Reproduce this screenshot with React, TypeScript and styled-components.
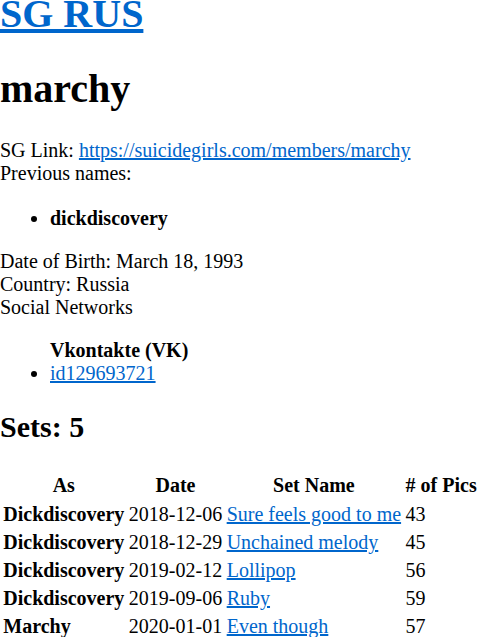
import styled, { createGlobalStyle } from 'styled-components';

const GlobalStyle = createGlobalStyle`
  body {
    margin: 0;
    background: #fff;
    color: #000;
    font-family: "Liberation Serif", "Times New Roman", serif;
    font-size: 20px;
  }
`;

const Link = styled.a`
  color: #0066cc;
  text-decoration: underline;
`;

const SiteTitle = styled.h1`
  font-size: 40px;
  margin: -10px 0 28px;
`;

const Name = styled.h1`
  font-size: 40px;
  margin: 0 0 26.8px;
`;

const Info = styled.div`
  line-height: normal;
`;

const List = styled.ul<{ $top?: number }>`
  margin: ${p => p.$top ?? 20}px 0 20px;
  padding-left: 50px;
`;

const Label = styled.b`
  display: block;
`;

const SetsTitle = styled.h2`
  font-size: 30px;
  margin: 25px 0 27px;
`;

const Table = styled.table`
  border-spacing: 2.5px;
  font-size: 20px;
  white-space: nowrap;
`;

const HeadCell = styled.th`
  padding: 1.6px 1.25px;
  text-align: center;
`;

const Cell = styled.td<{ $bold?: boolean }>`
  padding: 1.6px 1.25px;
  font-weight: ${p => (p.$bold ? 'bold' : 'normal')};
`;

interface SetRow {
  as: string;
  date: string;
  name: string;
  pics: number;
}

const sets: SetRow[] = [
  { as: 'Dickdiscovery', date: '2018-12-06', name: 'Sure feels good to me', pics: 43 },
  { as: 'Dickdiscovery', date: '2018-12-29', name: 'Unchained melody', pics: 45 },
  { as: 'Dickdiscovery', date: '2019-02-12', name: 'Lollipop', pics: 56 },
  { as: 'Dickdiscovery', date: '2019-09-06', name: 'Ruby', pics: 59 },
  { as: 'Marchy', date: '2020-01-01', name: 'Even though', pics: 57 },
];

const App = () => {
  return (
    <>
      <GlobalStyle />
      <SiteTitle>
        <Link href="#">SG RUS</Link>
      </SiteTitle>
      <Name>marchy</Name>
      <Info>
        SG Link: <Link href="#">https://suicidegirls.com/members/marchy</Link>
        <br />
        Previous names:
        <List $top={22}>
          <li>
            <b>dickdiscovery</b>
          </li>
        </List>
        Date of Birth: March 18, 1993
        <br />
        Country: Russia
        <br />
        Social Networks
        <List>
          <Label>Vkontakte (VK)</Label>
          <li>
            <Link href="#">id129693721</Link>
          </li>
        </List>
      </Info>
      <SetsTitle>Sets: 5</SetsTitle>
      <Table>
        <thead>
          <tr>
            <HeadCell>As</HeadCell>
            <HeadCell>Date</HeadCell>
            <HeadCell>Set Name</HeadCell>
            <HeadCell># of Pics</HeadCell>
          </tr>
        </thead>
        <tbody>
          {sets.map(s => (
            <tr key={s.date}>
              <Cell $bold>{s.as}</Cell>
              <Cell>{s.date}</Cell>
              <Cell>
                <Link href="#">{s.name}</Link>
              </Cell>
              <Cell>{s.pics}</Cell>
            </tr>
          ))}
        </tbody>
      </Table>
    </>
  );
};

export default App;
